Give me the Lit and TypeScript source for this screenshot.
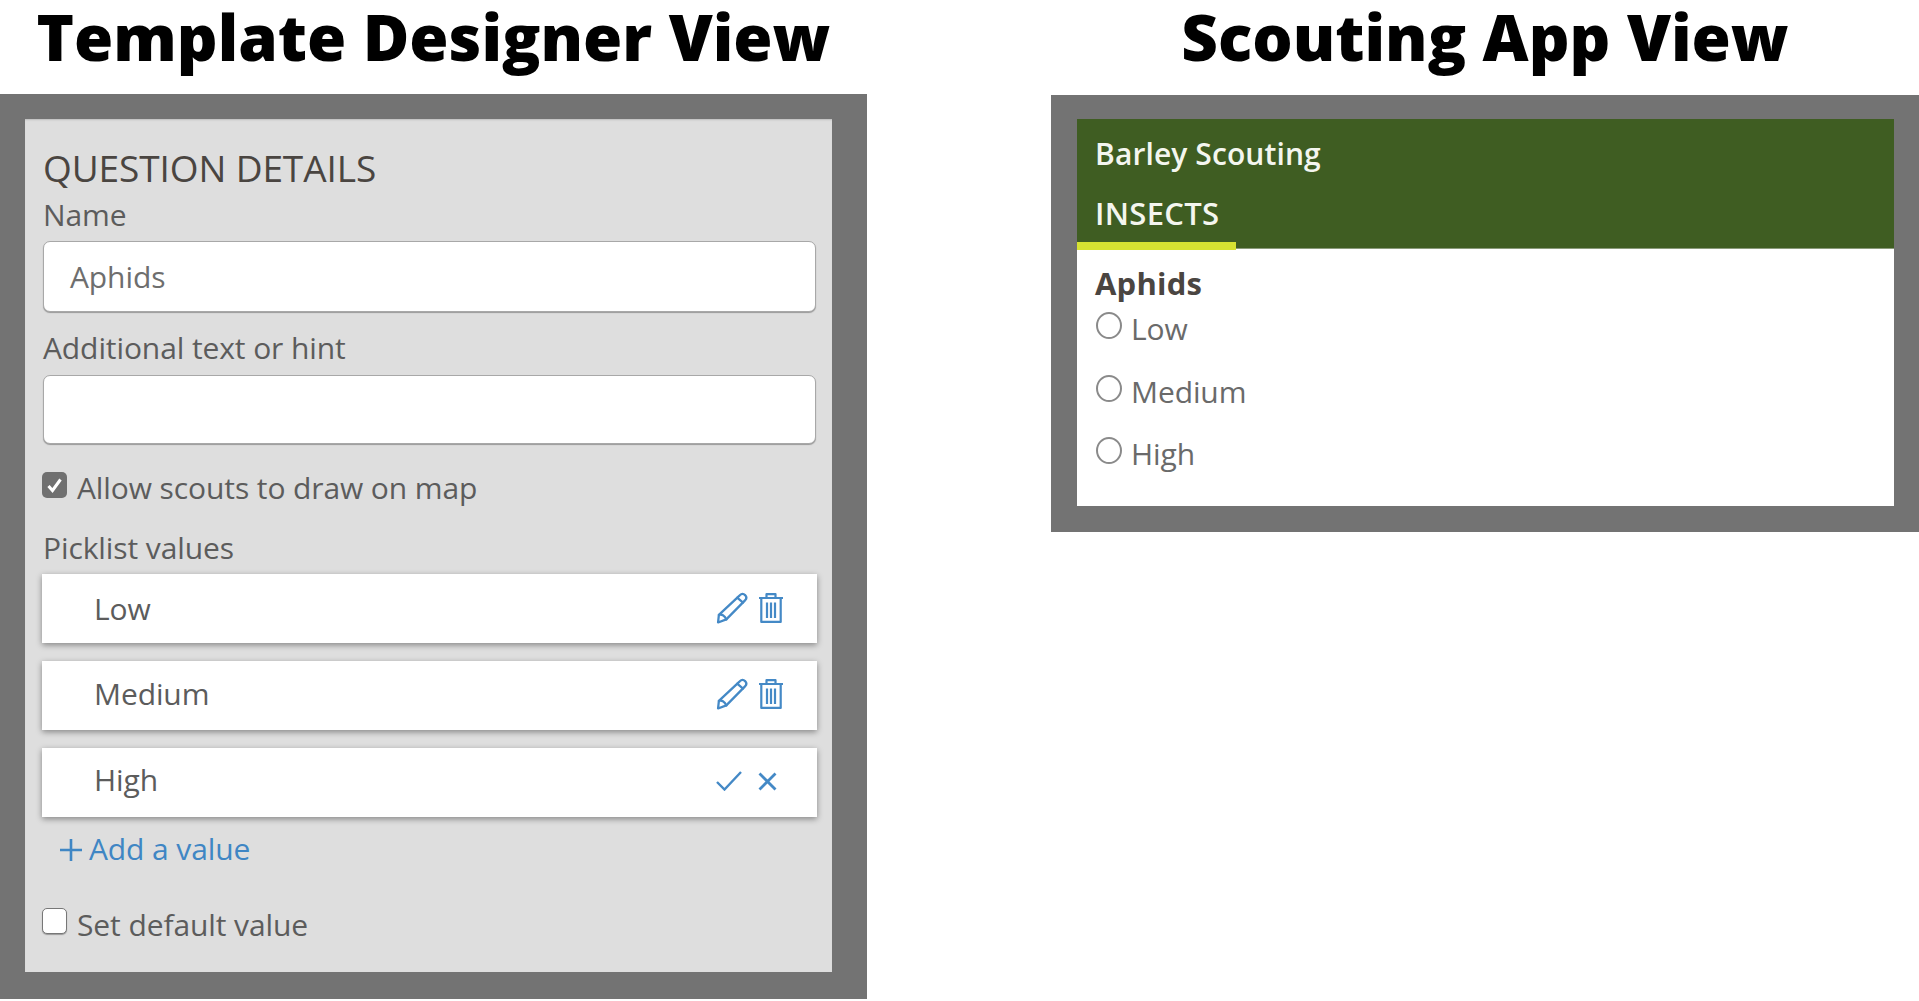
import { LitElement, html, css, svg } from "lit";
import { customElement } from "lit/decorators.js";

const pencil = svg`<svg class="ic" width="32" height="32" viewBox="0 0 31 31" fill="none" stroke="currentColor" stroke-width="2.200" stroke-linejoin="round" stroke-linecap="round"><path d="M23 3.200c1.700-1.700 3.700-1.700 5.200-.2s1.500 3.500-.1 5.100L10 26.500 2 29.500l.8-7.300z"/><path d="M20.500 5.500l5.700 4.800M2.800 22.200c2.200-1.200 5.800.7 7.200 4.300"/></svg>`;
const trash = svg`<svg class="ic" width="26" height="30" viewBox="0 0 26 30" fill="none" stroke="currentColor" stroke-width="2.200" stroke-linejoin="round"><path d="M1 5h24M8.500 4.500V1.200h9v3.300M3.300 5.500v23.400h19.400V5.500M9 9.500v15.500M13 9.500v15.500M17 9.500v15.500"/></svg>`;
const check = svg`<svg class="ic" width="26" height="20" viewBox="0 0 26 20" fill="none" stroke="currentColor" stroke-width="2.400"><path d="M1 11l7.500 7.500L25 1"/></svg>`;
const cross = svg`<svg class="ic" width="19" height="19" viewBox="0 0 19 19" fill="none" stroke="currentColor" stroke-width="2.800"><path d="M1.500 1.500l16 16M17.500 1.500l-16 16"/></svg>`;
const plus = svg`<svg class="plus" width="24" height="24" viewBox="0 0 24 24" fill="none" stroke="currentColor" stroke-width="2.600"><path d="M12 1v22M1 12h22"/></svg>`;

@customElement("app-root")
export class AppRoot extends LitElement {
  static styles = css`
    :host { display: block; width: 1919px; height: 1001px; background: #fff; overflow: hidden;
      font-family: "Open Sans", "Liberation Sans", sans-serif; color: #5a5a5a; }
    .page { display: grid; grid-template-columns: 867px 868px; column-gap: 184px; }
    .title { height: 94px; display: flex; justify-content: center; align-items: center; color: #000;
      font-size: 63.500px; font-weight: 800; line-height: 76px; padding-bottom: 20px; box-sizing: border-box; white-space: nowrap; }
    .frame { background: #737373; }
    .left { height: 905px; padding: 25px 35px 27px 25px; box-sizing: border-box; }
    .right { height: 437px; margin-top: 1px; padding: 24px 25px 26px 26px; box-sizing: border-box; }
    .panel { background: #dedede; height: 853px; box-sizing: border-box; padding: 29px 16px 0 18px;
      box-shadow: inset 0 2px 2px -1px #bdbdbd; }
    .t { font-size: 30px; line-height: 30px; letter-spacing: -0.100px; white-space: nowrap; color: #5c5c5c; }
    h2 { margin: 0; font-weight: 500; font-size: 37px; line-height: 40px; letter-spacing: -0.100px; color: #4a4541; height: 41px; white-space: nowrap; }
    .input { background: #fff; border-radius: 7px; border: 1px solid #a8a8a8; box-shadow: 0 1px 1px #999;
      box-sizing: border-box; display: flex; align-items: center; padding: 1px 26px 0; color: #6e6e6e; }
    .i1 { height: 71px; margin-top: 11px; }
    .i2 { height: 69px; margin-top: 12px; }
    .name { margin-top: 11px; }
    .hint { margin-top: 21px; }
    .chk { display: flex; gap: 10px; align-items: flex-start; margin-left: -1px; }
    .box { width: 25px; height: 26px; box-sizing: border-box; border-radius: 5px; flex: none; }
    .on { background: #707070; color: #fff; display: flex; align-items: center; justify-content: center; }
    .off { background: #fff; border: 1px solid #777; box-shadow: 0 1px 1px #999; }
    .c1 { margin-top: 28px; height: 31px; }
    .c1 .t { margin-top: 1px; }
    .c2 .t { margin-top: 2px; }
    .pick { margin-top: 30px; }
    .rows { margin-top: 11px; display: flex; flex-direction: column; gap: 18px; margin-left: -1px; margin-right: -1px; }
    .row { height: 69px; background: #fff; box-shadow: 0 2px 6px rgba(0,0,0,.4); display: flex; align-items: center;
      padding: 0 33px 0 52px; }
    .row .t { flex: 1; margin-top: -6px; }
    .row:first-child .t { margin-top: 0; }
    .row:nth-child(2) .t { margin-top: -4px; }
    .ic { color: #4489c6; display: block; }
    .tools { display: flex; align-items: center; gap: 10px; margin-top: -2px; }
    .row:nth-child(2) .tools { margin-top: -4px; }
    .tools2 { gap: 16px; margin-right: 7px; margin-top: -3px; }
    .add { margin-top: 19px; margin-left: 16px; display: flex; align-items: center; gap: 6px; color: #3f86c4; }
    .add .t { color: #3f86c4; margin-top: -2px; }
    .plus { display: block; flex: none; }
    .c2 { margin-top: 44px; }
    .app { background: #fff; height: 387px; }
    .head { background: #3f5d22; height: 130px; box-sizing: border-box; padding: 20px 0 0; color: #fff; border-bottom: 1px solid #8a9a7a; }
    .brand { padding-left: 18px; font-size: 30px; line-height: 30px; font-weight: 600; letter-spacing: 0.100px; color: #f4f6ef; white-space: nowrap; }
    .tab { margin-top: 29px; width: 159px; height: 52px; box-sizing: border-box; padding-left: 18px; font-size: 31px; line-height: 30px;
      font-weight: 600; letter-spacing: 0.300px; color: #f4f6ef; border-bottom: 8px solid #d6e232; white-space: nowrap; }
    .body { padding: 20px 18px 0; }
    .q { font-weight: 700; color: #4a4541; font-size: 31px; line-height: 29px; letter-spacing: 0.200px; }
    .opt { display: flex; align-items: flex-start; gap: 9px; height: 62.500px; }
    .radio { width: 26px; height: 27px; margin: 3px 0 0 1px; border-radius: 50%; border: 2px solid #8a8a8a; box-sizing: border-box; flex: none; background: #fff; }
    .opt .t { margin-top: 5px; color: #6a6a6a; }
    .opts { margin-top: 11px; }
  `;
  render() {
    return html`<div class="page">
      <section>
        <div class="title">Template Designer View</div>
        <div class="frame left"><div class="panel">
          <h2>QUESTION DETAILS</h2>
          <div class="t name">Name</div>
          <div class="input i1 t">Aphids</div>
          <div class="t hint">Additional text or hint</div>
          <div class="input i2"></div>
          <div class="chk c1"><span class="box on"><svg width="17" height="17" viewBox="0 0 17 17" fill="none" stroke="#fff" stroke-width="3"><path d="M2.500 9l4 4.500 8-11"/></svg></span><span class="t">Allow scouts to draw on map</span></div>
          <div class="t pick">Picklist values</div>
          <div class="rows">
            <div class="row"><span class="t">Low</span><span class="tools">${pencil}${trash}</span></div>
            <div class="row"><span class="t">Medium</span><span class="tools">${pencil}${trash}</span></div>
            <div class="row"><span class="t">High</span><span class="tools tools2">${check}${cross}</span></div>
          </div>
          <div class="add">${plus}<span class="t">Add a value</span></div>
          <div class="chk c2"><span class="box off"></span><span class="t">Set default value</span></div>
        </div></div>
      </section>
      <section>
        <div class="title">Scouting App View</div>
        <div class="frame right"><div class="app">
          <div class="head"><div class="brand">Barley Scouting</div><div class="tab">INSECTS</div></div>
          <div class="body">
            <div class="q">Aphids</div>
            <div class="opts">
              <div class="opt"><span class="radio"></span><span class="t">Low</span></div>
              <div class="opt"><span class="radio"></span><span class="t">Medium</span></div>
              <div class="opt"><span class="radio"></span><span class="t">High</span></div>
            </div>
          </div>
        </div></div>
      </section>
    </div>`;
  }
}
